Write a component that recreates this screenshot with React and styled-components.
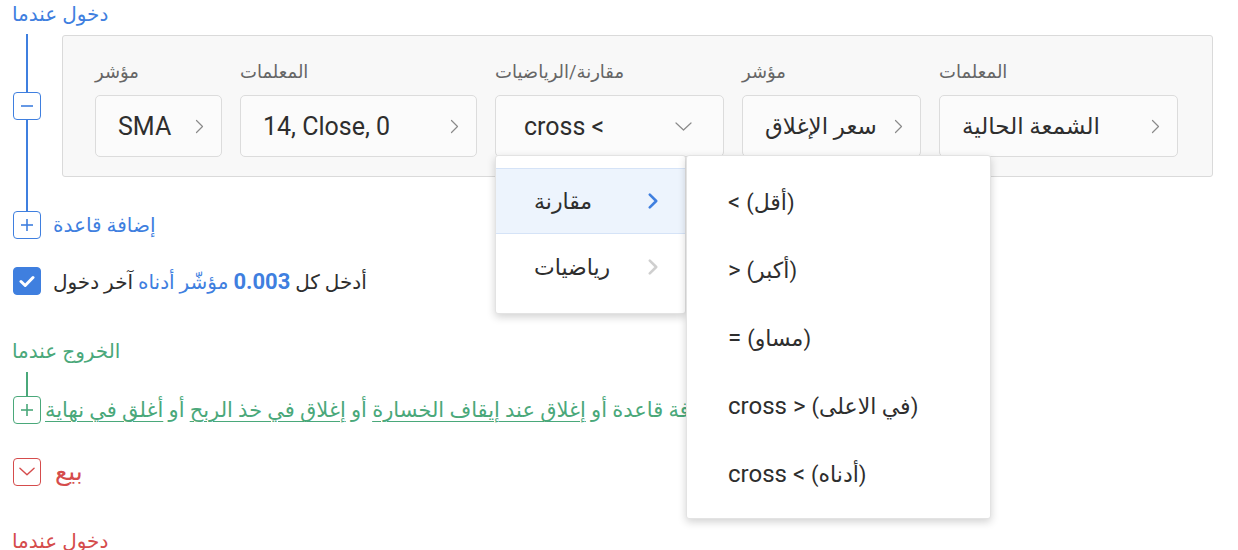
import React from 'react'
import styled, { createGlobalStyle } from 'styled-components'

const BLUE = '#3f7fdf'
const GREEN = '#4aa87a'
const RED = '#d54c4c'

const GlobalStyle = createGlobalStyle`
	body {
		margin: 0;
		background: #fff;
		font-family: Roboto, "DejaVu Sans", sans-serif;
		color: #333;
	}
`

const Page = styled.div`
	height: 550px;
	overflow: hidden;
	padding-left: 13px;
	position: relative;
`

const SectionTitle = styled.div`
	color: ${p => p.color};
	font-size: 20px;
	line-height: 28px;
	margin-top: ${p => p.top || 0}px;
	margin-left: -1px;
`

const RuleBlock = styled.div`
	display: flex;
	align-items: flex-start;
	margin-top: 6px;
`

const Rail = styled.div`
	display: flex;
	flex-direction: column;
	align-items: center;
	width: 28px;
	flex-shrink: 0;
`

const RailLine = styled.div`
	width: 2px;
	height: ${p => p.h}px;
	background: ${p => p.color};
	margin-left: ${p => p.offset || 0}px;
`

const IconBox = styled.div`
	width: 28px;
	height: 28px;
	box-sizing: border-box;
	border: 1.5px solid ${p => p.color};
	border-radius: 4px;
	background: ${p => (p.filled ? p.color : '#fff')};
	color: ${p => (p.filled ? '#fff' : p.color)};
	display: flex;
	align-items: center;
	justify-content: center;
	flex-shrink: 0;
`

const Panel = styled.div`
	width: 1151px;
	box-sizing: border-box;
	margin-left: 21px;
	margin-top: 1px;
	height: 142px;
	padding: 24px 32px 0;
	background: #f8f8f8;
	border: 1px solid #dadada;
	border-radius: 3px;
`

const FieldsRow = styled.div`
	display: flex;
	gap: 18px;
`

const Field = styled.div`
	width: ${p => p.w}px;
	flex-shrink: 0;
	position: relative;
`

const FieldLabel = styled.div`
	font-size: 18px;
	line-height: 24px;
	height: 24px;
	margin-bottom: 11px;
	color: #666;
	white-space: nowrap;
`

const FieldBox = styled.div`
	height: 62px;
	box-sizing: border-box;
	border: 1px solid #dcdcdc;
	border-radius: 5px;
	background: #fbfbfb;
	display: flex;
	align-items: center;
	justify-content: space-between;
	padding: 0 ${p => p.pr || 17}px 0 ${p => p.pl || 22}px;
	color: #2e2e2e;
	white-space: nowrap;
`

const BoxText = styled.span`
	font-size: ${p => (p.ar ? 23 : 25)}px;
`

const Row = styled.div`
	display: flex;
	align-items: center;
	margin-top: ${p => p.top || 0}px;
	gap: ${p => p.gap || 12}px;
	white-space: nowrap;
`

const RowText = styled.span`
	display: inline-block;
	font-size: ${p => p.size || 20}px;
	color: ${p => p.color || '#2e2e2e'};
	font-weight: ${p => p.weight || 400};
`

const Accent = styled.span`
	color: ${BLUE};
	font-weight: ${p => (p.bold ? 700 : 400)};
	font-size: ${p => (p.bold ? 22 : 20)}px;
`

const Link = styled.span`
	text-decoration: underline;
	text-underline-offset: 4px;
	text-decoration-thickness: 1px;
`

const MenuWrap = styled.div`
	position: absolute;
	top: 95px;
	left: 0;
	display: flex;
	align-items: flex-start;
	z-index: 10;
`

const Menu = styled.div`
	width: ${p => p.w}px;
	box-sizing: border-box;
	padding: 12px 0 ${p => p.pb}px;
	background: #fff;
	border: 1px solid #e3e3e3;
	border-radius: 3px;
	box-shadow: 0 3px 8px rgba(0, 0, 0, 0.18);
`

const MenuItem = styled.div`
	height: ${p => p.h}px;
	box-sizing: border-box;
	display: flex;
	align-items: center;
	justify-content: space-between;
	padding: 0 26px 0 ${p => p.pl}px;
	font-size: ${p => p.size}px;
	color: #2e2e2e;
	background: ${p => (p.active ? '#edf4fd' : 'transparent')};
	border-top: 1px solid ${p => (p.active ? '#d5e3f7' : 'transparent')};
	border-bottom: 1px solid ${p => (p.active ? '#d5e3f7' : 'transparent')};
	white-space: nowrap;
`

const ArabicPart = styled.bdi`
	font-size: 22px;
`

const ChevronRight = ({ color = '#8a8a8a', w = 9, h = 15, sw = 1.2 }) => (
	<svg width={w} height={h} viewBox="0 0 9 15">
		<polyline points="1.5,1.5 7.5,7.5 1.5,13.5" fill="none" stroke={color} strokeWidth={sw} strokeLinecap="round" strokeLinejoin="round" />
	</svg>
)

const ChevronDown = ({ color = '#8a8a8a', w = 17, h = 9, sw = 1.2 }) => (
	<svg width={w} height={h} viewBox="0 0 17 9">
		<polyline points="1,1 8.5,8 16,1" fill="none" stroke={color} strokeWidth={sw} strokeLinecap="round" strokeLinejoin="round" />
	</svg>
)

const Minus = ({ color }) => (
	<svg width="14" height="14" viewBox="0 0 14 14">
		<line x1="1" y1="7" x2="13" y2="7" stroke={color} strokeWidth="1.6" />
	</svg>
)

const Plus = ({ color }) => (
	<svg width="14" height="14" viewBox="0 0 14 14">
		<line x1="1" y1="7" x2="13" y2="7" stroke={color} strokeWidth="1.6" />
		<line x1="7" y1="1" x2="7" y2="13" stroke={color} strokeWidth="1.6" />
	</svg>
)

const Check = () => (
	<svg width="16" height="13" viewBox="0 0 16 13">
		<polyline points="2,6.5 6.2,10.5 14,2.5" fill="none" stroke="#fff" strokeWidth="3" strokeLinecap="round" strokeLinejoin="round" />
	</svg>
)

const compareItems = [
	{ sym: '<', ar: '(أقل)' },
	{ sym: '>', ar: '(أكبر)' },
	{ sym: '=', ar: '(مساو)' },
	{ sym: 'cross >', ar: '(في الاعلى)' },
	{ sym: 'cross <', ar: '(أدناه)' },
]

class App extends React.Component {
	render() {
		return (
			<Page>
				<GlobalStyle />
				<SectionTitle color={BLUE}>دخول عندما</SectionTitle>

				<RuleBlock>
					<Rail>
						<RailLine h={58} color={BLUE} />
						<IconBox color={BLUE}><Minus color={BLUE} /></IconBox>
						<RailLine h={91} color={BLUE} />
					</Rail>
					<Panel>
						<FieldsRow>
							<Field w={127}>
								<FieldLabel>مؤشر</FieldLabel>
								<FieldBox><BoxText>SMA</BoxText> <ChevronRight /></FieldBox>
							</Field>
							<Field w={237}>
								<FieldLabel>المعلمات</FieldLabel>
								<FieldBox><BoxText>14, Close, 0</BoxText> <ChevronRight /></FieldBox>
							</Field>
							<Field w={229}>
								<FieldLabel>مقارنة/الرياضيات</FieldLabel>
								<FieldBox pl={28} pr={31}><BoxText>cross &lt;</BoxText> <ChevronDown /></FieldBox>
								<MenuWrap>
									<Menu w={191} pb={13}>
										<MenuItem active h={66} pl={38} size={22}>
											<span>مقارنة</span>
											<ChevronRight color={BLUE} w={12} h={16} sw={2.4} />
										</MenuItem>
										<MenuItem h={66} pl={38} size={22}>
											<span>رياضيات</span>
											<ChevronRight color="#cfcfcf" w={12} h={16} sw={2.4} />
										</MenuItem>
									</Menu>
									<Menu w={305} pb={10}>
										{compareItems.map(item => (
											<MenuItem key={item.ar} h={68} pl={41} size={24}>
												<span dir="ltr">{item.sym} <ArabicPart>{item.ar}</ArabicPart></span>
											</MenuItem>
										))}
									</Menu>
								</MenuWrap>
							</Field>
							<Field w={179}>
								<FieldLabel>مؤشر</FieldLabel>
								<FieldBox><BoxText ar>سعر الإغلاق</BoxText> <ChevronRight /></FieldBox>
							</Field>
							<Field w={239}>
								<FieldLabel>المعلمات</FieldLabel>
								<FieldBox><BoxText ar>الشمعة الحالية</BoxText> <ChevronRight /></FieldBox>
							</Field>
						</FieldsRow>
					</Panel>
				</RuleBlock>

				<Row>
					<IconBox color={BLUE}><Plus color={BLUE} /></IconBox>
					<RowText color={BLUE} weight={500}>إضافة قاعدة</RowText>
				</Row>

				<Row top={28}>
					<IconBox color={BLUE} filled><Check /></IconBox>
					<RowText dir="rtl">
						أدخل كل <Accent bold>0.003</Accent> <Accent>مؤشّر أدناه</Accent> آخر دخول
					</RowText>
				</Row>

				<SectionTitle color={GREEN} top={42}>الخروج عندما</SectionTitle>
				<RailLine h={24} color={GREEN} offset={13} style={{ marginTop: 7 }} />
				<Row gap={4}>
					<IconBox color={GREEN}><Plus color={GREEN} /></IconBox>
					<RowText dir="rtl" color={GREEN} size={21}>
						إضافة قاعدة  أو <Link>إغلاق عند إيقاف الخسارة</Link> أو <Link>إغلاق في خذ الربح</Link> أو <Link>أغلق في نهاية</Link>
					</RowText>
				</Row>

				<Row top={33} gap={14}>
					<IconBox color={RED}><ChevronDown color={RED} w={16} h={9} sw={1.5} /></IconBox>
					<RowText color={RED} weight={500} size={25}>بيع</RowText>
				</Row>

				<SectionTitle color={RED} top={41}>دخول عندما</SectionTitle>
			</Page>
		)
	}
}

export default App
